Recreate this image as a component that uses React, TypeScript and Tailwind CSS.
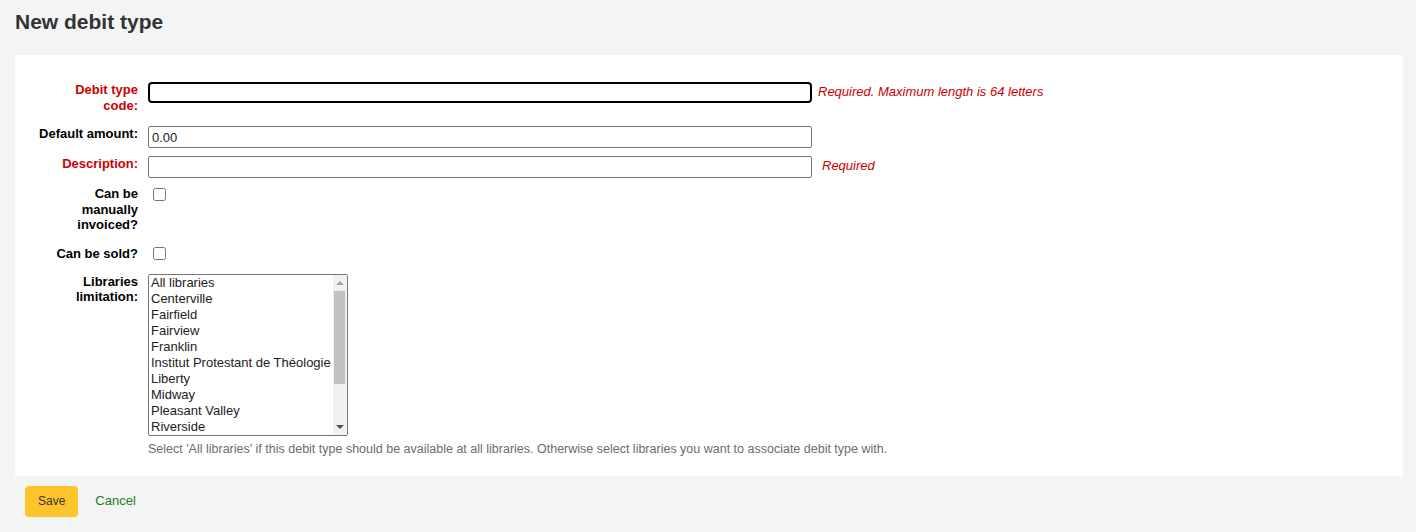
const libraries = [
  "All libraries",
  "Centerville",
  "Fairfield",
  "Fairview",
  "Franklin",
  "Institut Protestant de Théologie",
  "Liberty",
  "Midway",
  "Pleasant Valley",
  "Riverside",
];

function Label({ children, required }: { children: React.ReactNode; required?: boolean }) {
  return (
    <label
      className={`w-[100px] shrink-0 text-right font-bold leading-[1.2] pb-[5px] mr-[10px] ${
        required ? "text-[#cc0000]" : "text-[#000]"
      }`}
    >
      {children}
    </label>
  );
}

export default function App() {
  return (
    <div
      className="min-h-[532px] bg-[#f3f4f4] text-[13px] text-[#000]"
      style={{ fontFamily: '"Liberation Sans", Arial, sans-serif' }}
    >
      <h1 className="pt-[10px] pl-[15px] text-[21px] leading-[23px] font-bold text-[#333]">New debit type</h1>

      <form className="mt-[22px]">
        <div className="ml-[15px] mr-[13px] bg-white pt-[27px] pb-[20px]">
          <ol className="pl-[23px]">
            {/* Debit type code */}
            <li className="flex mb-2">
              <Label required>Debit type code:</Label>
              <input
                type="text"
                className="w-[664px] h-[21px] border-2 border-black rounded-[4px] outline-none px-[3px]"
              />
              <span className="ml-[6px] mt-[2px] italic text-[#cc0000] leading-[15px]">
                Required. Maximum length is 64 letters
              </span>
            </li>

            {/* Default amount */}
            <li className="flex mb-2">
              <Label>Default amount:</Label>
              <input
                type="text"
                defaultValue="0.00"
                className="w-[664px] h-[22px] border border-[#767676] rounded-[2px] outline-none px-[3px] text-[13px] text-[#222]"
              />
            </li>

            {/* Description */}
            <li className="flex mb-2">
              <Label required>Description:</Label>
              <input
                type="text"
                className="w-[664px] h-[22px] border border-[#767676] rounded-[2px] outline-none px-[3px]"
              />
              <span className="ml-[10px] mt-[2px] italic text-[#cc0000] leading-[15px]">Required</span>
            </li>

            {/* Manually invoiced */}
            <li className="flex mb-2">
              <Label>Can be manually invoiced?</Label>
              <input type="checkbox" className="w-[13px] h-[13px] mt-[2px] ml-[5px]" />
            </li>

            {/* Sold */}
            <li className="flex mb-[7px]">
              <Label>Can be sold?</Label>
              <input type="checkbox" className="w-[13px] h-[13px] mt-[1px] ml-[5px]" />
            </li>

            {/* Libraries */}
            <li className="flex">
              <Label>Libraries limitation:</Label>
              <div className="flex flex-col">
                {/* multi-select list with scrollbar */}
                <div className="flex w-[200px] h-[162px] border border-[#767676] rounded-[2px] overflow-hidden">
                  <ul className="flex-1 text-[13px] leading-[16px] text-[#222]">
                    {libraries.map((l) => (
                      <li key={l} className="px-[2px] h-[16px] whitespace-nowrap">
                        {l}
                      </li>
                    ))}
                  </ul>
                  <div className="w-[15px] bg-[#f1f1f1] flex flex-col items-center">
                    <div className="h-[16px] flex items-center justify-center">
                      <div className="w-0 h-0 border-l-[4px] border-r-[4px] border-b-[4px] border-l-transparent border-r-transparent border-b-[#a3a3a3]" />
                    </div>
                    <div className="w-[11px] h-[93px] bg-[#c1c1c1]" />
                    <div className="flex-1" />
                    <div className="h-[16px] flex items-center justify-center">
                      <div className="w-0 h-0 border-l-[4px] border-r-[4px] border-t-[4px] border-l-transparent border-r-transparent border-t-[#505050]" />
                    </div>
                  </div>
                </div>
                <div className="mt-[6px] text-[12.5px] text-[#6c6c6c] leading-[14px]">
                  Select 'All libraries' if this debit type should be available at all libraries. Otherwise select
                  libraries you want to associate debit type with.
                </div>
              </div>
            </li>
          </ol>
        </div>

        <div className="flex items-center pl-[25px] pt-[10px]">
          <button
            type="button"
            className="h-[31px] px-[13px] bg-[#ffc32b] rounded-[4px] text-[12px] text-[#333]"
          >
            Save
          </button>
          <a href="#" className="ml-[17px] text-[13px] text-[#1f7a1f]">
            Cancel
          </a>
        </div>
      </form>
    </div>
  );
}
